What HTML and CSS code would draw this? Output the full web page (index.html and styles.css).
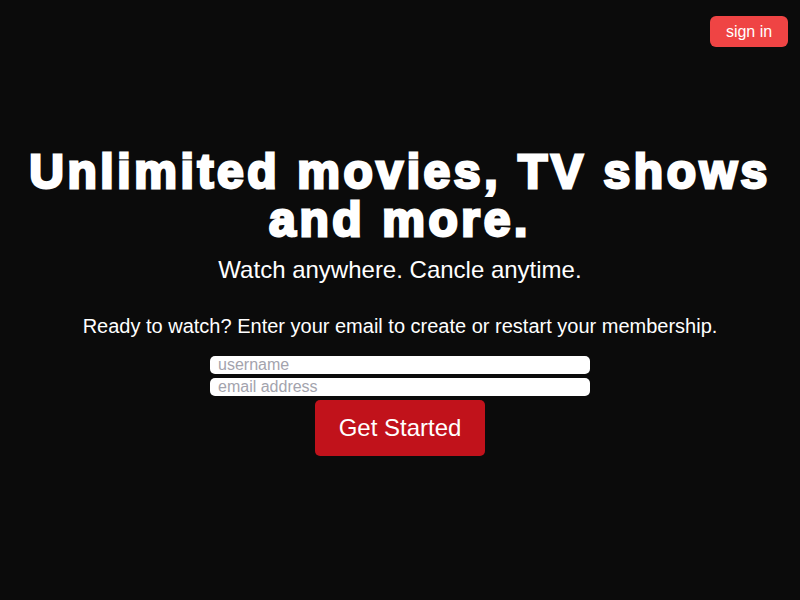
FILE: index.html
```html
<!DOCTYPE html>
<html>
<head>
<meta charset="utf-8">
<link rel="stylesheet" href="styles.css">
</head>
<body>
<header class="topbar">
  <button class="signin">sign in</button>
</header>
<main class="hero">
  <h1 class="title">Unlimited movies, TV shows and more.</h1>
  <p class="subtitle">Watch anywhere. Cancle anytime.</p>
  <p class="lead">Ready to watch? Enter your email to create or restart your membership.</p>
  <form class="form">
    <input class="field" type="text" placeholder="username">
    <input class="field" type="email" placeholder="email address">
    <button class="cta" type="button">Get Started</button>
  </form>
</main>
</body>
</html>
```
FILE: styles.css
```css
html, body {
  margin: 0;
  padding: 0;
  background: #0b0b0b;
  color: #fff;
  font-family: "Liberation Sans", Arial, sans-serif;
  height: 100%;
}
.topbar {
  display: flex;
  justify-content: flex-end;
  padding: 16px 12px 0 0;
}
.signin {
  background: #ef4444;
  color: #fff;
  border: none;
  border-radius: 6px;
  font-family: "Liberation Sans", Arial, sans-serif;
  font-size: 16px;
  width: 78px;
  height: 31px;
  padding: 0;
}
.hero {
  display: flex;
  flex-direction: column;
  align-items: center;
  text-align: center;
  padding-top: 101px;
}
.title {
  margin: 0;
  font-size: 48px;
  line-height: 48px;
  font-weight: 900;
  letter-spacing: 3.6px;
  -webkit-text-stroke: 2.8px #fff;
  padding: 0 20px;
}
.subtitle {
  margin: 12px 0 0;
  font-size: 24px;
  line-height: 28px;
}
.lead {
  margin: 30px 0 0;
  font-size: 20px;
  line-height: 24px;
}
.form {
  display: flex;
  flex-direction: column;
  align-items: center;
  gap: 4px;
  margin-top: 18px;
}
.field {
  width: 380px;
  height: 18px;
  box-sizing: border-box;
  border: none;
  border-radius: 5px;
  padding: 0 8px;
  font-family: "Liberation Sans", Arial, sans-serif;
  font-size: 16px;
  background: #fff;
  outline: none;
}
.field::placeholder {
  color: #a3a3ad;
}
.cta {
  width: 170px;
  height: 56px;
  background: #c1121b;
  color: #fff;
  border: none;
  border-radius: 5px;
  font-family: "Liberation Sans", Arial, sans-serif;
  font-size: 24px;
}
```
